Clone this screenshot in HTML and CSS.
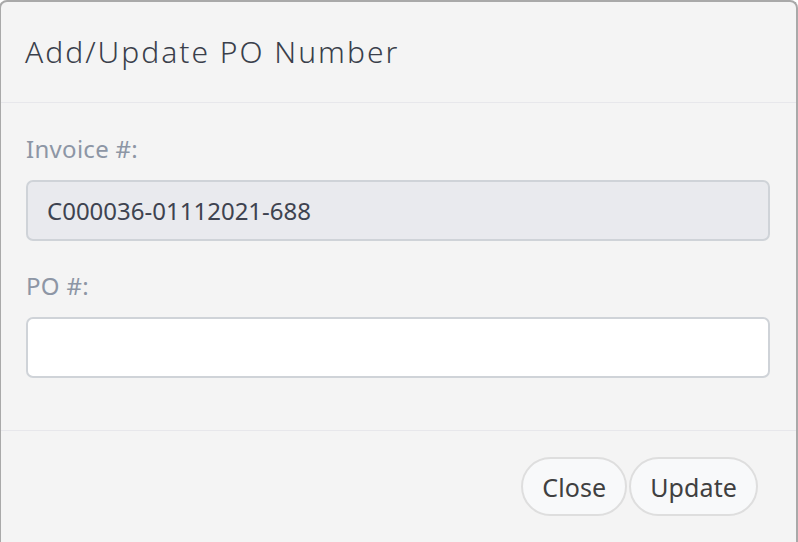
FILE: index.html
```html
<!DOCTYPE html>
<html lang="en">
<head>
<meta charset="utf-8">
<title>Add/Update PO Number</title>
<link rel="stylesheet" href="styles.css">
</head>
<body>
<div class="modal">
  <div class="modal-header">
    <h1 class="modal-title">Add/Update PO Number</h1>
  </div>
  <div class="modal-body">
    <div class="field">
      <label class="field-label">Invoice #:</label>
      <input class="field-input field-input--readonly" type="text" value="C000036-01112021-688" readonly>
    </div>
    <div class="field">
      <label class="field-label">PO #:</label>
      <input class="field-input" type="text" value="">
    </div>
  </div>
  <div class="modal-footer">
    <button class="btn" type="button">Close</button>
    <button class="btn" type="button">Update</button>
  </div>
</div>
</body>
</html>
```

FILE: styles.css
```css
* { box-sizing: border-box; }
html, body { margin: 0; padding: 0; background: #ffffff; overflow: hidden; }
body { font-family: "Noto Sans", "DejaVu Sans", sans-serif; }

.modal {
  margin-left: -1px;
  width: 799px;
  height: 542px;
  background: #f4f4f4;
  border: 2px solid #a9a9a9;
  border-bottom: none;
  border-radius: 8px 8px 0 0;
  display: flex;
  flex-direction: column;
}

.modal-header {
  height: 101px;
  border-bottom: 1px solid #e7e7eb;
  display: flex;
  align-items: center;
  padding-left: 24px;
}
.modal-title {
  margin: 0;
  font-size: 30px;
  font-weight: 300;
  color: #3a3f4b;
  letter-spacing: 2px;
  padding-bottom: 2px;
}

.modal-body {
  padding: 30px 26px 52px 25px;
  display: flex;
  flex-direction: column;
  gap: 29px;
  border-bottom: 1px solid #e7e7eb;
}
.field { display: flex; flex-direction: column; gap: 15px; }
.field-label {
  font-size: 24px;
  line-height: 32px;
  font-weight: 400;
  letter-spacing: 0.3px;
  color: #8d96a5;
}
.field-input {
  height: 61px;
  width: 100%;
  border: 2px solid #cfd3d8;
  border-radius: 7px;
  background: #ffffff;
  font-family: inherit;
  font-size: 24px;
  color: #3e4350;
  padding: 0 19px;
  outline: none;
}
.field-input--readonly { background: #e9eaee; }

.modal-footer {
  display: flex;
  justify-content: flex-end;
  gap: 2px;
  padding: 26px 38px 0 0;
}
.btn {
  height: 59px;
  border: 2px solid #dedede;
  border-radius: 30px;
  background: #f8f9fa;
  font-family: inherit;
  font-size: 25px;
  letter-spacing: 0.1px;
  color: #404040;
  padding: 0 19px;
  margin: 0;
}
```
